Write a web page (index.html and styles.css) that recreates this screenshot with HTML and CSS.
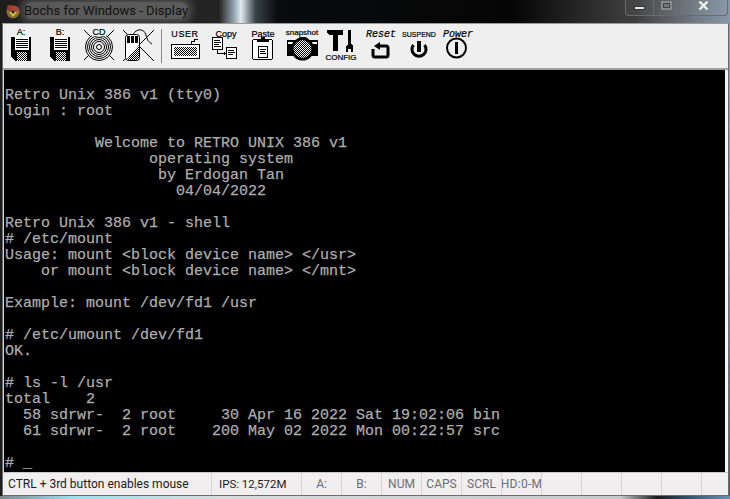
FILE: index.html
```html
<!DOCTYPE html>
<html lang="en">

<head>
    <meta charset="UTF-8">
    <title>Bochs for Windows - Display</title>
    <link rel="stylesheet" href="styles.css">
</head>

<body>
    <svg class="defs" width="0" height="0">
        <defs>
            <pattern id="dither" width="2" height="2" patternUnits="userSpaceOnUse">
                <rect width="2" height="2" fill="#fff"></rect>
                <rect width="1" height="1" fill="#000"></rect>
                <rect x="1" y="1" width="1" height="1" fill="#000"></rect>
            </pattern>
        </defs>
    </svg>

    <div class="titlebar">
        <svg class="app-icon" width="16" height="16" viewBox="0 0 16 16">
            <circle cx="8" cy="9" r="6.500" fill="#8a6a2a"></circle>
            <circle cx="5" cy="5" r="3" fill="#b03030"></circle>
            <circle cx="11" cy="6" r="2.500" fill="#a04040"></circle>
            <path d="M4 9h8l-4 5z" fill="#e0c040"></path>
            <circle cx="8" cy="9" r="1.500" fill="#222"></circle>
        </svg>
        <span class="title">Bochs for Windows - Display</span>
        <div class="caption-buttons">
            <div class="cap cap-min"><span class="min-glyph"></span></div>
            <div class="cap cap-max"><span class="max-glyph"></span></div>
            <div class="cap cap-close">
                <svg width="11" height="9" viewBox="0 0 11 9">
                    <path d="M1.500 0.500L9.500 8.500M9.500 0.500L1.500 8.500" stroke="#eee" stroke-width="2.400" fill="none"></path>
                </svg>
            </div>
        </div>
    </div>

    <div class="window">
        <div class="toolbar">
            <div class="tool">
                <svg width="32" height="32" viewBox="0 0 32 32" shape-rendering="crispEdges">
                    <text class="ico-label big" x="16" y="6" text-anchor="middle">A:</text>
                    <path d="M6 8h20v24H10l-4-4z" fill="#000"></path>
                    <rect x="10" y="8" width="14" height="13" fill="#fff"></rect>
                    <path d="M11 10h12v1H11zM11 12h12v1H11zM11 14h12v1H11zM11 16h12v1H11zM11 18h12v1H11z" fill="#000"></path>
                    <rect x="12" y="23" width="10" height="9" fill="url(#dither)"></rect>
                </svg>
            </div>
            <div class="tool">
                <svg width="32" height="32" viewBox="0 0 32 32" shape-rendering="crispEdges">
                    <text class="ico-label big" x="16" y="6" text-anchor="middle">B:</text>
                    <path d="M6 8h20v24H10l-4-4z" fill="#000"></path>
                    <rect x="10" y="8" width="14" height="13" fill="#fff"></rect>
                    <path d="M11 10h12v1H11zM11 12h12v1H11zM11 14h12v1H11zM11 16h12v1H11zM11 18h12v1H11z" fill="#000"></path>
                    <rect x="12" y="23" width="10" height="9" fill="url(#dither)"></rect>
                </svg>
            </div>
            <div class="tool">
                <svg width="32" height="32" viewBox="0 0 32 32">
                    <g fill="none" stroke="#000">
                        <path d="M1 1L31 31M31 1L1 31"></path>
                        <circle cx="16" cy="18" r="13.500" fill="#f0f0f0"></circle>
                        <circle cx="16" cy="18" r="11.500"></circle>
                        <circle cx="16" cy="18" r="9.500"></circle>
                        <circle cx="16" cy="18" r="7.500"></circle>
                        <circle cx="16" cy="18" r="5.500"></circle>
                        <circle cx="16" cy="18" r="2.500"></circle>
                    </g>
                    <rect x="9" y="0" width="14" height="7" fill="#f0f0f0"></rect>
                    <text class="ico-label big" x="16" y="6" text-anchor="middle">CD</text>
                </svg>
            </div>
            <div class="tool">
                <svg width="32" height="32" viewBox="0 0 32 32">
                    <path d="M1 1L32 32M32 1L1 32" stroke="#000" fill="none"></path>
                    <path d="M11 6C14 -1 22 -1 24 6C25 10 26 13 30 15" stroke="#000" fill="none"></path>
                    <rect x="3.500" y="5.500" width="14" height="26" rx="3" fill="#fff" stroke="#000"></rect>
                    <path d="M5 7h3v7H5zM9 7h3v7H9zM13 7h3v7h-3z" fill="#000"></path>
                    <path d="M4 31L17 16V31z" fill="url(#dither)"></path>
                </svg>
            </div>
            <div class="tool-sep"></div>
            <div class="tool">
                <svg width="32" height="32" viewBox="0 0 32 32" shape-rendering="crispEdges">
                    <text class="ico-label wide" x="16" y="8" text-anchor="middle">USER</text>
                    <path d="M22 15v-3h3v-2h4" stroke="#000" fill="none"></path>
                    <rect x="2.500" y="15.500" width="28" height="14" fill="#fff" stroke="#000"></rect>
                    <rect x="5" y="18" width="23" height="9" fill="url(#dither)"></rect>
                </svg>
            </div>
            <div class="tool">
                <svg width="32" height="32" viewBox="0 0 32 32" shape-rendering="crispEdges">
                    <text class="ico-label big" x="18" y="8" text-anchor="middle">Copy</text>
                    <rect x="4.500" y="8.500" width="10" height="12" fill="#fff" stroke="#000"></rect>
                    <path d="M6 11h6v1H6zM6 13h7v1H6zM6 15h5v1H6zM6 17h7v1H6z" fill="#000"></path>
                    <rect x="18.500" y="18.500" width="10" height="11" fill="#fff" stroke="#000"></rect>
                    <path d="M20 21h6v1h-6zM20 23h7v1h-7zM20 25h5v1h-5z" fill="#000"></path>
                    <path d="M10 21v3h6v-1h1v1h1v1h-1v1h-1v-1h-7v-5z" fill="#000"></path>
                </svg>
            </div>
            <div class="tool">
                <svg width="32" height="32" viewBox="0 0 32 32" shape-rendering="crispEdges">
                    <text class="ico-label big" x="16" y="8" text-anchor="middle">Paste</text>
                    <rect x="5.500" y="10.500" width="20" height="20" rx="2" fill="#fff" stroke="#000"></rect>
                    <path d="M10 10h12v3H10z" fill="#000"></path>
                    <path d="M14 8h4v2h-4z" fill="#000"></path>
                    <rect x="11.500" y="17.500" width="9" height="11" fill="#fff" stroke="#000"></rect>
                    <path d="M13 20h6v1h-6zM13 22h5v1h-5zM13 24h6v1h-6z" fill="#000"></path>
                </svg>
            </div>
            <div class="tool">
                <svg width="32" height="32" viewBox="0 0 32 32">
                    <text class="ico-label mid" x="16" y="6" text-anchor="middle">snapshot</text>
                    <path d="M1 11h10l3-3h6l3 3h9v16H1z" fill="#000"></path>
                    <rect x="2" y="13" width="6" height="2" fill="#fff"></rect>
                    <rect x="25" y="13" width="6" height="2" fill="#fff"></rect>
                    <circle cx="16.500" cy="20" r="11.500" fill="#000"></circle>
                    <circle cx="16.500" cy="20" r="9" fill="url(#dither)"></circle>
                </svg>
            </div>
            <div class="tool">
                <svg width="32" height="32" viewBox="0 0 32 32" shape-rendering="crispEdges">
                    <path d="M2 1h16v5h-5v16H8V6H4L2 4z" fill="#000"></path>
                    <path d="M23 1h3v14l2 2v6h-2v-3h-3v3h-2v-6l2-2z" fill="#000"></path>
                    <text class="ico-label mid" x="16" y="31" text-anchor="middle">CONFIG</text>
                </svg>
            </div>
            <div class="tool">
                <svg width="32" height="32" viewBox="0 0 32 32">
                    <text class="ico-script" x="17" y="8" text-anchor="middle">Reset</text>
                    <path d="M14 17h8a2 2 0 0 1 2 2v7a2 2 0 0 1-2 2h-11a2 2 0 0 1-2-2v-6" fill="none" stroke="#000" stroke-width="3"></path>
                    <path d="M16 13v8l-6-4z" fill="#000"></path>
                </svg>
            </div>
            <div class="tool">
                <svg width="32" height="32" viewBox="0 0 32 32">
                    <text class="ico-label" x="16" y="8" text-anchor="middle">SUSPEND</text>
                    <path d="M10.500 16a7 7 0 1 0 11 0" fill="none" stroke="#000" stroke-width="3"></path>
                    <rect x="14" y="12" width="4" height="11" fill="#000"></rect>
                </svg>
            </div>
            <div class="tool">
                <svg width="32" height="32" viewBox="0 0 32 32">
                    <text class="ico-script" x="16" y="8" text-anchor="middle">Power</text>
                    <circle cx="14.500" cy="19" r="9.500" fill="none" stroke="#000" stroke-width="2"></circle>
                    <rect x="13" y="13" width="3" height="12" fill="#000"></rect>
                </svg>
            </div>
        </div>

        <pre class="screen">

Retro Unix 386 v1 (tty0)
login : root

          Welcome to RETRO UNIX 386 v1
                operating system
                 by Erdogan Tan
                   04/04/2022

Retro Unix 386 v1 - shell
# /etc/mount
Usage: mount &lt;block device name&gt; &lt;/usr&gt;
    or mount &lt;block device name&gt; &lt;/mnt&gt;

Example: mount /dev/fd1 /usr

# /etc/umount /dev/fd1
OK.

# ls -l /usr
total    2
  58 sdrwr-  2 root     30 Apr 16 2022 Sat 19:02:06 bin
  61 sdrwr-  2 root    200 May 02 2022 Mon 00:22:57 src

# _</pre>

        <div class="statusbar">
            <div class="cell cell-msg">CTRL + 3rd button enables mouse</div>
            <div class="cell cell-ips">IPS: 12,572M</div>
            <div class="cell off">A:</div>
            <div class="cell off">B:</div>
            <div class="cell off">NUM</div>
            <div class="cell off">CAPS</div>
            <div class="cell off">SCRL</div>
            <div class="cell off hd">HD:0-M</div>
            <div class="cell"></div>
            <div class="cell"></div>
            <div class="cell"></div>
            <div class="cell"></div>
            <div class="cell cell-last"></div>
        </div>
    </div>

    <div class="glass-bottom"></div>
</body>

</html>
```

FILE: styles.css
```css
* {
    margin: 0;
    padding: 0;
    box-sizing: border-box;
}

html,
body {
    width: 730px;
    height: 499px;
    overflow: hidden;
}

body {
    display: flex;
    flex-direction: column;
    background:
        linear-gradient(100deg, transparent 0, transparent 78%, rgba(170, 200, 230, 0.75) 93%, rgba(60, 80, 100, 0.5) 100%),
        linear-gradient(90deg, #1d1d1d 0, #242424 30%, #8fa0ac 32%, #dfeaf3 33%, #39424a 35%, #0a0b0d 38%, #050505 70%, #3a3a3a 85%, #555 100%);
    font-family: "Roboto", "Noto Sans", sans-serif;
}

.defs {
    position: absolute;
}

/* title bar */
.titlebar {
    flex: none;
    height: 23px;
    display: flex;
    align-items: flex-start;
    padding-left: 5px;
    padding-top: 2px;
}

.app-icon {
    margin-top: 1px;
}

.title {
    margin-left: 3px;
    font-size: 13px;
    line-height: 17px;
    color: #111;
    white-space: nowrap;
    background: rgba(210, 210, 210, 0.32);
    border-radius: 8px;
    box-shadow: 0 0 8px 4px rgba(210, 210, 210, 0.28);
}

.caption-buttons {
    margin-left: auto;
    margin-top: -2px;
    margin-right: 2px;
    display: flex;
    height: 16px;
    border: 1px solid #6a6a6a;
    border-top: none;
    border-radius: 0 0 4px 4px;
}

.cap {
    display: flex;
    align-items: center;
    justify-content: center;
    border-right: 1px solid #6a6a6a;
    background: rgba(255, 255, 255, 0.04);
}

.cap-min {
    width: 28px;
}

.cap-max {
    width: 26px;
}

.cap-close {
    width: 47px;
    border-right: none;
    padding-bottom: 5px;
}

.min-glyph {
    width: 11px;
    height: 4px;
    margin-top: 1px;
    background: #e8e8e8;
    border: 1px solid #333;
}

.max-glyph {
    width: 11px;
    height: 9px;
    margin-bottom: 4px;
    background: #777;
    border: 2px solid #8a8a8a;
    box-shadow: inset 0 0 0 1px #444;
}

/* window */
.window {
    flex: none;
    height: 473px;
    margin-left: 2px;
    margin-right: 1px;
    display: flex;
    flex-direction: column;
    background: #f0f0f0;
    border: 1px solid #6c6c6c;
    border-top-color: #9a9a9a;
}

.toolbar {
    flex: none;
    height: 46px;
    display: flex;
    align-items: flex-start;
    padding: 5px 0 0 2px;
    background: #efefef;
    border-bottom: 2px solid #a0a0a0;
}

.tool {
    width: 39px;
    height: 32px;
    flex: none;
}

.tool svg {
    display: block;
    overflow: visible;
}

.tool-sep {
    flex: none;
    width: 1px;
    height: 34px;
    margin-right: 7px;
    background: #8a8a8a;
}

.ico-label {
    font-family: "Liberation Sans", sans-serif;
    font-size: 7px;
    fill: #000;
    stroke: #000;
    stroke-width: 0.2px;
}

.ico-label.mid {
    font-size: 8px;
}

.ico-label.big {
    font-size: 9px;
}

.ico-label.wide {
    font-size: 9px;
    letter-spacing: 0.600px;
}

.ico-script {
    font-family: "Liberation Mono", monospace;
    font-style: italic;
    font-size: 10px;
    fill: #000;
    stroke: #000;
    stroke-width: 0.2px;
}

/* vga text area */
.screen {
    flex: none;
    height: 402px;
    padding: 2px 0 0 1px;
    background: #000;
    color: #adadad;
    font-family: "Liberation Mono", monospace;
    font-size: 15px;
    line-height: 16px;
    -webkit-text-stroke: 0.25px #adadad;
    overflow: hidden;
    border-left: 1px solid #d0d0d0;
    border-right: 3px solid #f4f4f4;
}

/* status bar */
.statusbar {
    flex: 1;
    display: flex;
    background: #f0eeee;
    border-top: 1px solid #c8c8c8;
    font-size: 12px;
    color: #1c1c1c;
}

.cell {
    flex: none;
    width: 40px;
    display: flex;
    align-items: center;
    justify-content: center;
    overflow: hidden;
    white-space: nowrap;
    border-right: 1px solid #d6d4d4;
}

.cell-msg {
    width: 209px;
    justify-content: flex-start;
    padding-left: 5px;
}

.cell-ips {
    width: 90px;
    justify-content: flex-start;
    padding-left: 7px;
    font-size: 11.500px;
}

.cell-last {
    width: 25px;
    border-right: none;
}

.off {
    color: #6d6d78;
}

.hd {
    letter-spacing: 0.300px;
}

.glass-bottom {
    flex: 1;
    background: linear-gradient(90deg, #7d8a90 0, #9fe0ee 10%, #d8dcdc 30%, #c4c8ca 85%, #1a1a1c 90%, #30506a 94%, #6a90b0 100%);
}
```
